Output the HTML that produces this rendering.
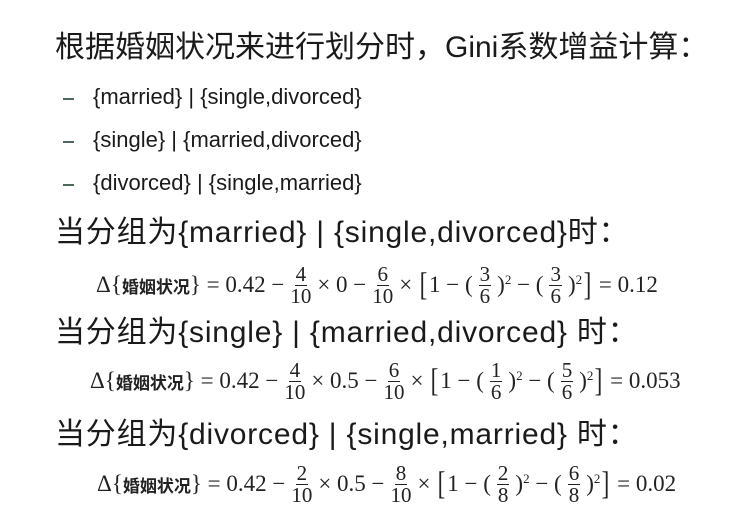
<!DOCTYPE html>
<html><head><meta charset="utf-8"><style>
body{margin:0;width:741px;height:526px;background:#fff;position:relative;overflow:hidden;color:#1a1a1a}
.t{position:absolute;font-family:"Liberation Sans","Noto Sans CJK SC",sans-serif;white-space:nowrap}
.h{font-size:30px;line-height:34px}
.h2{letter-spacing:0.8px}
.b{font-size:22px;line-height:26px}
.d{position:absolute;width:11px;height:2px;background:#4a6a5a}
.f{position:absolute;font-family:"Liberation Serif","Noto Serif CJK SC",serif;font-size:23px;white-space:nowrap;display:flex;align-items:center;color:#222}
.fr{display:inline-flex;flex-direction:column;align-items:center;margin:0 6px;line-height:21px;font-size:21px}
.fr span:first-child{border-bottom:1px solid #222;padding:0 1px}
.cn{font-family:"Noto Sans CJK SC",sans-serif;font-weight:bold;font-size:17px}
.br{font-size:33px;transform:scaleX(.7);display:inline-block}
sup{font-size:13px;position:relative;top:-5px}
</style></head><body>
<div class="t h" style="left:55px;top:31px">根据婚姻状况来进行划分时，Gini系数增益计算：</div>
<div class="d" style="left:63px;top:98px"></div><div class="t b" style="left:93px;top:84px">{married} | {single,divorced}</div>
<div class="d" style="left:63px;top:141px"></div><div class="t b" style="left:93px;top:127px">{single} | {married,divorced}</div>
<div class="d" style="left:63px;top:184px"></div><div class="t b" style="left:93px;top:170px">{divorced} | {single,married}</div>

<div class="t h h2" style="left:55px;top:216px">当分组为{married} | {single,divorced}时：</div>
<div class="f" style="left:96px;top:262px;height:46px">Δ{<span class="cn">婚姻状况</span>}&nbsp;=&nbsp;0.42&nbsp;−<span class="fr"><span>4</span><span>10</span></span>×&nbsp;0&nbsp;−<span class="fr"><span>6</span><span>10</span></span>×&nbsp;<span class="br">[</span>1&nbsp;−&nbsp;(<span class="fr"><span>3</span><span>6</span></span>)<sup>2</sup>&nbsp;−&nbsp;(<span class="fr"><span>3</span><span>6</span></span>)<sup>2</sup><span class="br">]</span>&nbsp;=&nbsp;0.12</div>

<div class="t h h2" style="left:55px;top:316px">当分组为{single} | {married,divorced} 时：</div>
<div class="f" style="left:90px;top:358px;height:46px">Δ{<span class="cn">婚姻状况</span>}&nbsp;=&nbsp;0.42&nbsp;−<span class="fr"><span>4</span><span>10</span></span>×&nbsp;0.5&nbsp;−<span class="fr"><span>6</span><span>10</span></span>×&nbsp;<span class="br">[</span>1&nbsp;−&nbsp;(<span class="fr"><span>1</span><span>6</span></span>)<sup>2</sup>&nbsp;−&nbsp;(<span class="fr"><span>5</span><span>6</span></span>)<sup>2</sup><span class="br">]</span>&nbsp;=&nbsp;0.053</div>

<div class="t h h2" style="left:55px;top:418px">当分组为{divorced} | {single,married} 时：</div>
<div class="f" style="left:97px;top:461px;height:46px">Δ{<span class="cn">婚姻状况</span>}&nbsp;=&nbsp;0.42&nbsp;−<span class="fr"><span>2</span><span>10</span></span>×&nbsp;0.5&nbsp;−<span class="fr"><span>8</span><span>10</span></span>×&nbsp;<span class="br">[</span>1&nbsp;−&nbsp;(<span class="fr"><span>2</span><span>8</span></span>)<sup>2</sup>&nbsp;−&nbsp;(<span class="fr"><span>6</span><span>8</span></span>)<sup>2</sup><span class="br">]</span>&nbsp;=&nbsp;0.02</div>
</body></html>
